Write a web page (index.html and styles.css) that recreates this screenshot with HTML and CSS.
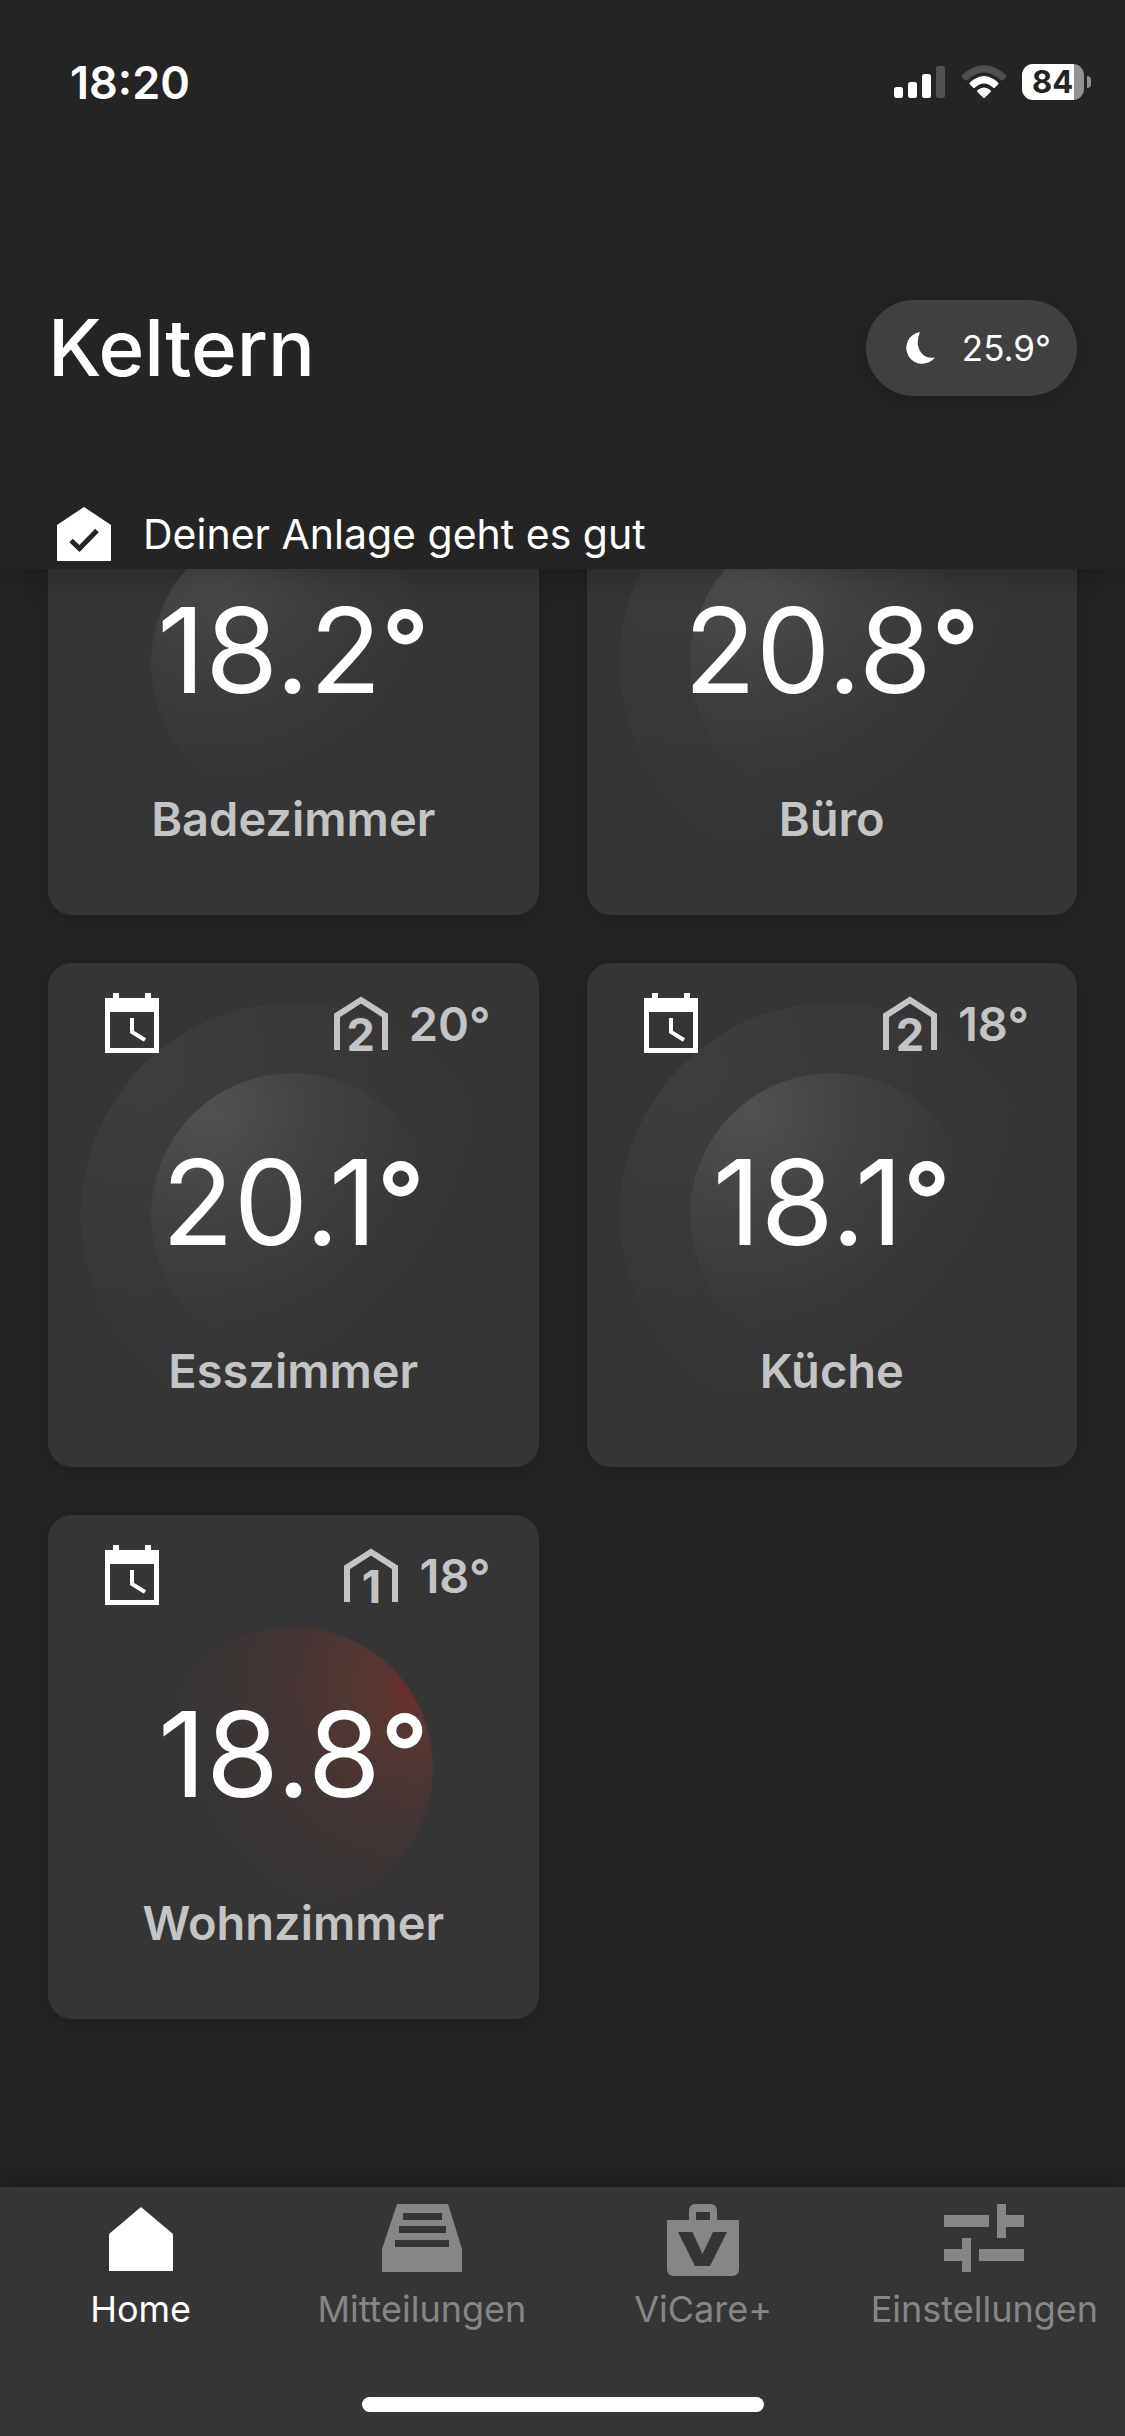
FILE: index.html
```html
<!DOCTYPE html>
<html lang="de">
<head>
<meta charset="utf-8">
<meta name="viewport" content="width=device-width, initial-scale=1">
<title>Keltern</title>
<link rel="stylesheet" href="styles.css">
</head>
<body>
<svg class="sprite" width="0" height="0" aria-hidden="true">
  <symbol id="calendar" viewBox="0 0 72 72">
    <path fill="currentColor" fill-rule="evenodd" d="M17 6h6v5h26V6h6v5h8v55H9V11h8zM14 25v36h44V25z"/>
    <path fill="none" stroke="currentColor" stroke-width="4" d="M36 31v14l13 8"/>
  </symbol>
  <symbol id="house" viewBox="0 0 72 72">
    <path fill="none" stroke="currentColor" stroke-width="6" d="M12 63V28.500L36 13l24 15.500V63"/>
  </symbol>
</svg>

<header class="header">
  <div class="status">
    <span class="status-time">18:20</span>
    <div class="status-icons">
      <svg width="52" height="36" viewBox="0 0 52 36" aria-label="Signal">
        <g fill="#fff"><rect x="0" y="23" width="9" height="11" rx="2.500"/><rect x="14" y="18" width="9" height="16" rx="2.500"/><rect x="28" y="10" width="9" height="24" rx="2.500"/></g>
        <rect x="42" y="2" width="9" height="32" rx="2.500" fill="#505050"/>
      </svg>
      <svg width="46" height="36" viewBox="0 0 46 36" aria-label="WLAN">
        <path fill="#505050" d="M1.500 10.500Q0 12 1.500 13.500L4 16q1 1 2.500 0Q23 1 39.500 16q1.500 1 2.500 0l2.500-2.500q1.500-1.500 0-3Q23-8 1.500 10.500z"/>
        <path fill="#fff" d="M9 18.500q-1 1 0 2l3 3q1 1 2 0 9-8 18 0 1 1 2 0l3-3q1-1 0-2-14-13-28 0zM16.500 26q-1 1 0 2l5.500 5.500q1 1 2 0L29.500 28q1-1 0-2-6.500-5-13 0z"/>
      </svg>
      <span class="battery"><span class="battery-level">84</span></span>
    </div>
  </div>

  <div class="title-row">
    <h1 class="title">Keltern</h1>
    <button class="weather" type="button">
      <svg width="34" height="36" viewBox="0 0 34 36" aria-hidden="true"><path fill="#fff" d="M16 2A16 16 0 1 0 31 27.500Q22 29 17 22.500 11 14 16 2z"/></svg>
      <span>25.9°</span>
    </button>
  </div>

  <div class="system">
    <svg width="54" height="54" viewBox="0 0 54 54" aria-hidden="true">
      <path fill="#fff" d="M27 0l27 18v36H0V18z"/>
      <path fill="none" stroke="#242424" stroke-width="5" d="M14 33.500l8.500 8L40 23.500"/>
    </svg>
    <span>Deiner Anlage geht es gut</span>
  </div>
</header>

<main class="rooms">
  <div class="grid">
    <article class="card">
      <div class="card-head"></div>
      <p class="temp">18.2<span class="degree">°</span></p>
      <h2 class="name">Badezimmer</h2>
    </article>
    <article class="card card--rings">
      <div class="card-head"></div>
      <p class="temp">20.8<span class="degree">°</span></p>
      <h2 class="name">Büro</h2>
    </article>
    <article class="card card--rings">
      <div class="card-head">
        <svg class="icon icon--schedule" aria-label="Zeitplan"><use href="#calendar"/></svg>
        <span class="target"><span class="level"><svg class="level-house"><use href="#house"/></svg><span class="level-number">2</span></span><span>20°</span></span>
      </div>
      <p class="temp">20.1<span class="degree">°</span></p>
      <h2 class="name">Esszimmer</h2>
    </article>
    <article class="card card--rings">
      <div class="card-head">
        <svg class="icon icon--schedule" aria-label="Zeitplan"><use href="#calendar"/></svg>
        <span class="target"><span class="level"><svg class="level-house"><use href="#house"/></svg><span class="level-number">2</span></span><span>18°</span></span>
      </div>
      <p class="temp">18.1<span class="degree">°</span></p>
      <h2 class="name">Küche</h2>
    </article>
    <article class="card card--heating">
      <div class="card-head">
        <svg class="icon icon--schedule" aria-label="Zeitplan"><use href="#calendar"/></svg>
        <span class="target"><span class="level"><svg class="level-house"><use href="#house"/></svg><span class="level-number">1</span></span><span>18°</span></span>
      </div>
      <p class="temp">18.8<span class="degree">°</span></p>
      <h2 class="name">Wohnzimmer</h2>
    </article>
  </div>
</main>

<nav class="tabs">
  <div class="tab-row">
    <a class="tab tab--active" href="#home">
      <svg class="tab-icon" viewBox="0 0 80 72"><path fill="currentColor" d="M40 3l32 27v37H8V30z"/></svg>
      <span>Home</span>
    </a>
    <a class="tab" href="#mitteilungen">
      <svg class="tab-icon" viewBox="0 0 80 72"><path fill="currentColor" fill-rule="evenodd" d="M15 0h51l14 45v23H0V45zM21 9v7h39V9zM17 22v7h47v-7zM13 36v7h54v-7z"/></svg>
      <span>Mitteilungen</span>
    </a>
    <a class="tab" href="#vicare">
      <svg class="tab-icon" viewBox="0 0 80 72"><path fill="currentColor" fill-rule="evenodd" d="M26 16V7q0-7 7-7h14q7 0 7 7v9h22v49q0 7-7 7H11q-7 0-7-7V16zM33 8v8h14V8zM15 28l17 34h15l17-34H50L39.500 50 29.500 28z"/></svg>
      <span>ViCare+</span>
    </a>
    <a class="tab" href="#einstellungen">
      <svg class="tab-icon" viewBox="0 0 80 72"><path fill="currentColor" d="M0 11h45v12H0zM53 0h9v11h18v12H62v11h-9zM18 34h9v34h-9V57H0V45h18zM35 45h45v12H35z"/></svg>
      <span>Einstellungen</span>
    </a>
  </div>
  <div class="home-indicator"></div>
</nav>
</body>
</html>
```

FILE: styles.css
```css
* {
  box-sizing: border-box;
}

body {
  margin: 0;
  min-height: 100vh;
  display: flex;
  flex-direction: column;
  background: #242424;
  color: #fff;
  font-family: Inter, "Liberation Sans", sans-serif;
}

h1, h2, p {
  margin: 0;
}

.sprite {
  position: absolute;
}

/* Header */

.header {
  position: relative;
  z-index: 1;
  background: #242424;
  box-shadow: 0 0 32px rgba(0, 0, 0, 0.3);
}

.status {
  display: flex;
  align-items: center;
  justify-content: space-between;
  height: 164px;
  padding: 0 34px 0 70px;
}

.status-time {
  font-size: 45px;
  font-weight: 600;
}

.status-icons {
  display: flex;
  align-items: center;
  gap: 15px;
}

.battery {
  position: relative;
  width: 62px;
  height: 36px;
  margin-right: 7px;
  border-radius: 11px;
  background: linear-gradient(90deg, #fff 52px, #929292 52px);
}

.battery::after {
  content: "";
  position: absolute;
  left: 65px;
  top: 12px;
  width: 4px;
  height: 12px;
  border-radius: 0 6px 6px 0;
  background: #929292;
}

.battery-level {
  display: block;
  padding-left: 10px;
  color: #242424;
  font-size: 31px;
  font-weight: 700;
  line-height: 36px;
}

.title-row {
  display: flex;
  align-items: center;
  justify-content: space-between;
  height: 96px;
  margin-top: 136px;
  padding: 0 48px;
}

.title {
  font-size: 78px;
  font-weight: 500;
  line-height: 100px;
}

.weather {
  display: flex;
  align-items: center;
  gap: 24px;
  height: 96px;
  padding: 0 26px 0 38px;
  border: 0;
  border-radius: 48px;
  background: #404040;
  box-shadow: 0 4px 24px rgba(0, 0, 0, 0.2);
  color: #fff;
  font: 400 35px/48px Inter, "Liberation Sans", sans-serif;
}

.system {
  display: flex;
  align-items: center;
  gap: 32px;
  margin-top: 108px;
  padding: 0 57px 5px;
  font-size: 41px;
  line-height: 60px;
}

/* Room cards */

.rooms {
  flex: 1;
  overflow: hidden;
  padding: 0 48px;
}

.grid {
  display: grid;
  grid-template-columns: 1fr 1fr;
  gap: 48px;
  margin-top: -158px;
  padding-bottom: 48px;
}

.card {
  position: relative;
  height: 504px;
  padding-top: 24px;
  border-radius: 24px;
  background: #353535;
  box-shadow: 0 4px 24px rgba(0, 0, 0, 0.15);
  text-align: center;
}

.card::before,
.card::after {
  content: "";
  position: absolute;
  left: 50%;
  top: 50%;
  border-radius: 50%;
  transform: translate(-50%, -50%);
}

.card::after {
  width: 284px;
  height: 284px;
  background: radial-gradient(circle at 22% 14%, rgba(255, 255, 255, 0.11), rgba(255, 255, 255, 0.045) 32%, rgba(255, 255, 255, 0) 68%);
}

.card--rings::before {
  width: 424px;
  height: 424px;
  background: radial-gradient(circle at 15% 15%, rgba(255, 255, 255, 0.045), rgba(255, 255, 255, 0.015) 40%, rgba(255, 255, 255, 0) 70%);
}

.card--heating::after {
  width: 280px;
  height: 280px;
  background: radial-gradient(circle at 94% 22%, rgba(190, 30, 28, 0.42), rgba(190, 62, 40, 0.26) 12%, rgba(170, 50, 45, 0.14) 36%, rgba(150, 60, 45, 0.05) 56%, rgba(150, 60, 45, 0) 76%);
}

.card-head {
  position: relative;
  z-index: 1;
  display: flex;
  align-items: center;
  justify-content: space-between;
  height: 72px;
  padding: 0 48px;
}

.icon {
  display: block;
  width: 72px;
  height: 72px;
}

.icon--schedule {
  color: #fff;
}

.target {
  display: flex;
  align-items: center;
  gap: 12px;
  color: #c4c4c4;
  font-size: 47px;
  font-weight: 600;
}

.level {
  display: grid;
  width: 72px;
  height: 72px;
  font-size: 45px;
  font-weight: 700;
  line-height: 48px;
}

.level-house,
.level-number {
  grid-area: 1 / 1;
}

.level-house {
  width: 72px;
  height: 72px;
}

.level-number {
  align-self: end;
  text-align: center;
}

.temp {
  position: relative;
  z-index: 1;
  margin-top: 71px;
  font-size: 118px;
  font-weight: 400;
  line-height: 144px;
}

.degree {
  font-size: 104px;
  font-weight: 600;
  line-height: 0;
  vertical-align: 8px;
}

.name {
  position: relative;
  z-index: 1;
  margin-top: 67px;
  color: #c4c4c4;
  font-size: 47px;
  font-weight: 600;
  line-height: 60px;
}

/* Tab bar */

.tabs {
  position: relative;
  z-index: 1;
  padding: 17px 0 24px;
  background: #353535;
  box-shadow: 0 0 32px rgba(0, 0, 0, 0.4);
}

.tab-row {
  display: grid;
  grid-template-columns: repeat(4, 1fr);
}

.tab {
  display: flex;
  flex-direction: column;
  align-items: center;
  gap: 9px;
  color: #868686;
  font-size: 36px;
  line-height: 48px;
  text-decoration: none;
}

.tab--active {
  color: #fff;
}

.tab-icon {
  width: 80px;
  height: 72px;
}

.home-indicator {
  width: 402px;
  height: 15px;
  margin: 64px auto 0;
  border-radius: 8px;
  background: #fff;
}
```
